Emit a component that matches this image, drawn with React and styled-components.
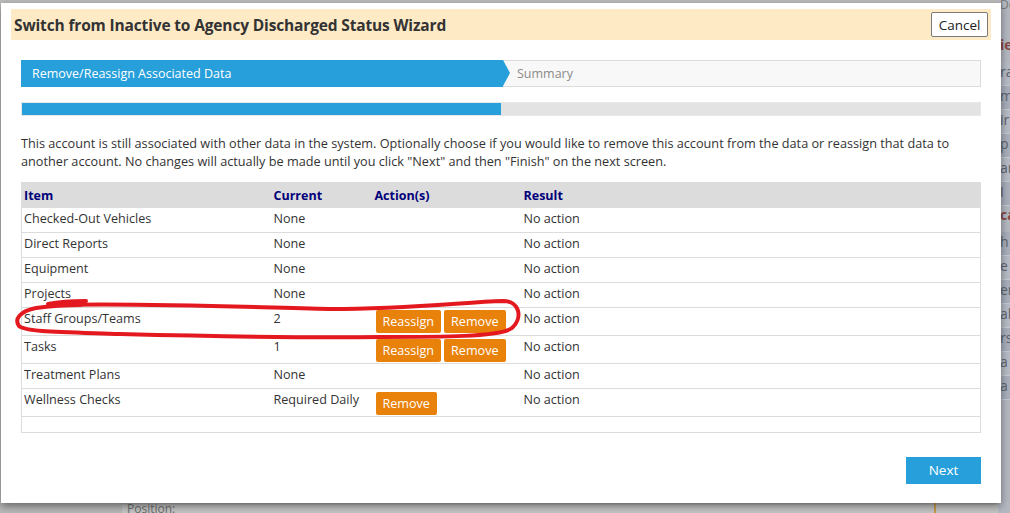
import React from "react";
import styled, { createGlobalStyle } from "styled-components";

const GlobalStyle = createGlobalStyle`
  html, body {
    margin: 0;
    padding: 0;
    background: #aeb2b9;
  }
  body {
    font-family: "Open Sans", "Noto Sans", Arial, sans-serif;
    color: #333;
  }
  * { box-sizing: border-box; }
`;

const BLUE = "#269fda";
const ORANGE = "#e8820a";

const Page = styled.div`
  position: relative;
  width: 1010px;
  height: 513px;
  overflow: hidden;
`;

/* dimmed application page sitting behind the dialog */
const Backdrop = styled.div`
  display: grid;
  grid-template-columns: 1fr 12px;
  width: 100%;
  height: 100%;
  background: #b3b6bc;
`;

const BackMain = styled.div`
  display: flex;
  flex-direction: column;
  justify-content: flex-end;
  background: #bdbdbd;
`;

const BackFooter = styled.div`
  display: flex;
  height: 12px;
  background: linear-gradient(#9a9a9a, #c4c4c4 40%);
`;

const BackGutter = styled.div`
  width: 122px;
  background: #b8b8b8;
`;

const BackLabel = styled.div`
  font-size: 12px;
  line-height: 12px;
  padding-top: 2px;
  color: #6f6f6f;
  flex: 1;
  display: flex;
  justify-content: space-between;
  padding-left: 5px;
  padding-right: 62px;
`;

const TanRule = styled.span`
  width: 2px;
  background: #c79a4e;
`;

const BackSide = styled.div`
  display: flex;
  flex-direction: column;
  background: #b4b8c1;
  padding-left: 2px;
  font-size: 14px;
  line-height: 14px;
  color: #5d6470;
  overflow: hidden;
`;

const SideTop = styled.div`
  height: 36px;
  color: #7a7a7a;
  font-size: 12px;
  line-height: 10px;
  white-space: nowrap;
`;

const SideHead = styled.div`
  font-weight: 700;
  color: #8a4a48;
  padding: 2px 0 10px;
  white-space: nowrap;
`;

const SideRow = styled.div`
  height: 24px;
  padding-top: 3px;
  border-bottom: 1px solid #c6cad2;
  background: ${(p) => (p.$alt ? "#a9afbb" : "#b6bbc5")};
  white-space: nowrap;
`;

/* the wizard dialog floats over the page */
const Dialog = styled.div`
  position: absolute;
  top: 3px;
  left: 1px;
  width: 1000px;
  height: 500px;
  background: #fff;
  box-shadow: 0 3px 8px rgba(0, 0, 0, 0.45);
  display: flex;
  flex-direction: column;
`;

const Header = styled.div`
  margin: 6px 10px 0 10px;
  height: 31px;
  background: #feeac5;
  display: flex;
  align-items: center;
  justify-content: space-between;
  padding: 0 3px 0 3px;
`;

const Title = styled.h1`
  margin: 0;
  font-size: 15.5px;
  font-weight: 700;
  color: #333;
  letter-spacing: -0.15px;
`;

const CancelButton = styled.button`
  height: 25px;
  width: 57px;
  padding: 0;
  background: #fff;
  border: 1px solid #7a7a7a;
  border-radius: 2px;
  font-family: inherit;
  font-size: 13.5px;
  color: #222;
`;

const Body = styled.div`
  padding: 0 20px;
  display: flex;
  flex-direction: column;
`;

const Steps = styled.div`
  margin-top: 20px;
  height: 27px;
  display: flex;
`;

const StepActive = styled.div`
  position: relative;
  flex: 0 0 482px;
  background: ${BLUE};
  color: #fff;
  font-size: 12.5px;
  display: flex;
  align-items: center;
  padding-left: 11px;
  z-index: 1;
  &::after {
    content: "";
    position: absolute;
    left: 100%;
    top: 0;
    border-left: 7px solid ${BLUE};
    border-top: 13.5px solid transparent;
    border-bottom: 13.5px solid transparent;
  }
`;

const StepPending = styled.div`
  flex: 1;
  background: #f8f8f8;
  border: 1px solid #dcdcdc;
  border-left: none;
  color: #8a8a8a;
  font-size: 12.5px;
  display: flex;
  align-items: center;
  padding-left: 14px;
`;

const Progress = styled.div`
  margin-top: 15px;
  height: 14px;
  background: #e3e3e3;
  border: 1px solid #e8e8e8;
  display: flex;
`;

const ProgressFill = styled.div`
  background: ${BLUE};
  height: 100%;
`;

const Intro = styled.p`
  margin: 18px 0 12px;
  font-size: 12.7px;
  line-height: 18px;
  color: #333;
`;

const Table = styled.table`
  width: 100%;
  border-collapse: collapse;
  border: 1px solid #dcdcdc;
  table-layout: fixed;
  font-size: 12.6px;
`;

const HeadCell = styled.th`
  background: #dcdcdc;
  color: #00007a;
  font-weight: 700;
  font-size: 12.5px;
  text-align: left;
  height: 25px;
  padding: 0 2px;
  width: ${(p) => p.$w || "auto"};
`;

const Row = styled.tr`
  border-bottom: 1px solid #dcdcdc;
`;

const Cell = styled.td`
  vertical-align: top;
  padding: 2px 2px 4px;
  line-height: 18px;
  color: #333;
`;

const SpacerCell = styled.td`
  height: 16px;
  padding: 0;
`;

const ActionCell = styled.td`
  vertical-align: top;
  padding: ${(p) => 2 + (p.$offset || 0)}px 3px ${(p) => 2 - (p.$offset || 0)}px;
`;

const Actions = styled.div`
  display: flex;
  gap: 3px;
`;

const ActionButton = styled.button`
  height: 23px;
  padding: 0 7px;
  background: ${ORANGE};
  border: none;
  border-radius: 2px;
  color: #fff;
  font-family: inherit;
  font-size: 12.6px;
  line-height: 23px;
`;

const Footer = styled.div`
  display: flex;
  justify-content: flex-end;
  margin-top: 24px;
`;

const NextButton = styled.button`
  width: 75px;
  height: 27px;
  background: ${BLUE};
  border: none;
  color: #fff;
  font-family: inherit;
  font-size: 13.5px;
`;

/* hand-drawn red marker loop over the dialog */
const Marker = styled.svg`
  position: absolute;
  inset: 0;
  pointer-events: none;
`;

const rows = [
  { item: "Checked-Out Vehicles", current: "None", actions: [] },
  { item: "Direct Reports", current: "None", actions: [] },
  { item: "Equipment", current: "None", actions: [] },
  { item: "Projects", current: "None", actions: [] },
  { item: "Staff Groups/Teams", current: "2", actions: ["Reassign", "Remove"] },
  { item: "Tasks", current: "1", actions: ["Reassign", "Remove"], offset: 1 },
  { item: "Treatment Plans", current: "None", actions: [] },
  { item: "Wellness Checks", current: "Required Daily", actions: ["Remove"], offset: 1 },
];

const sideRows = ["ra", "m", "ir", "p", "ar", "I"];
const sideRows2 = ["h", "e", "er", "al", "rs", "a", "a"];

export default function App() {
  return (
    <>
      <GlobalStyle />
      <Page>
        <Backdrop>
          <BackMain>
            <BackFooter>
              <BackGutter />
              <BackLabel>
                <span>Position:</span>
                <TanRule />
              </BackLabel>
            </BackFooter>
          </BackMain>
          <BackSide>
            <SideTop>Docu</SideTop>
            <SideHead>ie</SideHead>
            {sideRows.map((t, i) => (
              <SideRow key={t + i} $alt={i % 2 === 1}>{t}</SideRow>
            ))}
            <SideHead>ca</SideHead>
            {sideRows2.map((t, i) => (
              <SideRow key={t + i} $alt={i % 2 === 0}>{t}</SideRow>
            ))}
          </BackSide>
        </Backdrop>

        <Dialog>
          <Header>
            <Title>Switch from Inactive to Agency Discharged Status Wizard</Title>
            <CancelButton>Cancel</CancelButton>
          </Header>
          <Body>
            <Steps>
              <StepActive>Remove/Reassign Associated Data</StepActive>
              <StepPending>Summary</StepPending>
            </Steps>
            <Progress>
              <ProgressFill style={{ width: "50%" }} />
            </Progress>
            <Intro>
              This account is still associated with other data in the system. Optionally choose if you
              would like to remove this account from the data or reassign that data to another account.
              No changes will actually be made until you click "Next" and then "Finish" on the next
              screen.
            </Intro>
            <Table>
              <thead>
                <tr>
                  <HeadCell $w="250px">Item</HeadCell>
                  <HeadCell $w="101px">Current</HeadCell>
                  <HeadCell $w="149px">Action(s)</HeadCell>
                  <HeadCell>Result</HeadCell>
                </tr>
              </thead>
              <tbody>
                {rows.map((r) => (
                  <Row key={r.item}>
                    <Cell>{r.item}</Cell>
                    <Cell>{r.current}</Cell>
                    {r.actions.length ? (
                      <ActionCell $offset={r.offset}>
                        <Actions>
                          {r.actions.map((a) => (
                            <ActionButton key={a}>{a}</ActionButton>
                          ))}
                        </Actions>
                      </ActionCell>
                    ) : (
                      <Cell />
                    )}
                    <Cell>No action</Cell>
                  </Row>
                ))}
                <Row>
                  <SpacerCell colSpan={4} />
                </Row>
              </tbody>
            </Table>
            <Footer>
              <NextButton>Next</NextButton>
            </Footer>
          </Body>
        </Dialog>

        <Marker width="1010" height="513" viewBox="0 0 1010 513">
          <g fill="none" stroke="#e3191f" strokeWidth="4" strokeLinecap="round" strokeLinejoin="round">
            <path d="M86 301 C72 301 58 302 48 304" />
            <path d="M58 305 C150 303 240 307 330 309 C410 309 465 302 503 301 C520 301 523 318 512 328 C500 337 440 337 380 337 C300 338 200 336 120 334 C60 332 26 332 19 326 C14 319 20 311 36 308 C50 306 62 305 82 305" />
          </g>
        </Marker>
      </Page>
    </>
  );
}
